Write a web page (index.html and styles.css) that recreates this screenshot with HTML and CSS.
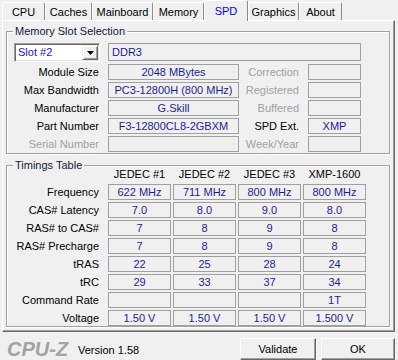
FILE: index.html
```html
<!DOCTYPE html>
<html>
<head>
<meta charset="utf-8">
<link rel="stylesheet" href="styles.css">
</head>
<body>
<div class="tabs">
  <div class="tab t-cpu">CPU</div>
  <div class="tab t-caches">Caches</div>
  <div class="tab t-mainboard">Mainboard</div>
  <div class="tab t-memory">Memory</div>
  <div class="tab t-spd active">SPD</div>
  <div class="tab t-graphics">Graphics</div>
  <div class="tab t-about">About</div>
</div>
<div class="panel">
  <div class="group slot">
    <div class="group-title">Memory Slot Selection</div>
    <div class="slot-grid">
      <div class="combo">
        <span class="combo-text">Slot #2</span>
        <span class="combo-btn"><svg width="7" height="4" viewBox="0 0 7 4"><polygon points="0,0 7,0 3.5,4" fill="#000"/></svg></span>
      </div>
      <div class="field wide">DDR3</div>

      <div class="label">Module Size</div>
      <div class="field">2048 MBytes</div>
      <div class="label dis">Correction</div>
      <div class="field"></div>

      <div class="label">Max Bandwidth</div>
      <div class="field">PC3-12800H (800 MHz)</div>
      <div class="label dis">Registered</div>
      <div class="field"></div>

      <div class="label">Manufacturer</div>
      <div class="field">G.Skill</div>
      <div class="label dis">Buffered</div>
      <div class="field"></div>

      <div class="label">Part Number</div>
      <div class="field">F3-12800CL8-2GBXM</div>
      <div class="label">SPD Ext.</div>
      <div class="field">XMP</div>

      <div class="label dis">Serial Number</div>
      <div class="field"></div>
      <div class="label dis">Week/Year</div>
      <div class="field"></div>
    </div>
  </div>

  <div class="group timings">
    <div class="group-title">Timings Table</div>
    <div class="t-grid">
      <div></div>
      <div class="head">JEDEC #1</div>
      <div class="head">JEDEC #2</div>
      <div class="head">JEDEC #3</div>
      <div class="head">XMP-1600</div>

      <div class="tlabel">Frequency</div>
      <div class="field">622 MHz</div><div class="field">711 MHz</div><div class="field">800 MHz</div><div class="field">800 MHz</div>

      <div class="tlabel">CAS# Latency</div>
      <div class="field">7.0</div><div class="field">8.0</div><div class="field">9.0</div><div class="field">8.0</div>

      <div class="tlabel">RAS# to CAS#</div>
      <div class="field">7</div><div class="field">8</div><div class="field">9</div><div class="field">8</div>

      <div class="tlabel">RAS# Precharge</div>
      <div class="field">7</div><div class="field">8</div><div class="field">9</div><div class="field">8</div>

      <div class="tlabel">tRAS</div>
      <div class="field">22</div><div class="field">25</div><div class="field">28</div><div class="field">24</div>

      <div class="tlabel">tRC</div>
      <div class="field">29</div><div class="field">33</div><div class="field">37</div><div class="field">34</div>

      <div class="tlabel">Command Rate</div>
      <div class="field"></div><div class="field"></div><div class="field"></div><div class="field">1T</div>

      <div class="tlabel">Voltage</div>
      <div class="field">1.50 V</div><div class="field">1.50 V</div><div class="field">1.50 V</div><div class="field">1.500 V</div>
    </div>
  </div>
</div>
<div class="footer">
  <div class="logo">CPU-Z</div>
  <div class="version">Version 1.58</div>
  <button class="btn validate">Validate</button>
  <button class="btn ok">OK</button>
</div>
</body>
</html>
```

FILE: styles.css
```css
* { box-sizing: border-box; }

body {
  margin: 0;
  width: 398px;
  height: 360px;
  overflow: hidden;
  background: #f0f0f0;
  font-family: "Liberation Sans", Arial, sans-serif;
  font-size: 11px;
  color: #000;
}

/* tabs */
.tabs {
  display: flex;
  align-items: flex-end;
  height: 20px;
  padding-left: 2px;
}

.tab {
  height: 18px;
  padding: 0;
  flex: none;
  display: flex;
  align-items: center;
  justify-content: center;
  border-top: 1px solid #fff;
  border-left: 1px solid #fff;
  border-right: 1px solid #8c8c8c;
  border-top-left-radius: 2px;
  border-top-right-radius: 2px;
  background: #f0f0f0;
  white-space: nowrap;
}

.t-cpu { width: 43px; }
.t-caches { width: 47px; }
.t-mainboard { width: 61px; }
.t-memory { width: 51px; }
.t-spd { width: 44px; }
.t-graphics { width: 51px; }
.t-about { width: 43px; }

.tab.active {
  height: 21px;
  margin-bottom: -1px;
  padding-bottom: 1px;
  position: relative;
  z-index: 1;
  color: #0000ff;
}

/* panel */
.panel {
  margin-left: 2px;
  width: 393px;
  border: 1px solid;
  border-color: #fff #696969 #696969 #fff;
  box-shadow: inset -1px -1px 0 #a0a0a0;
  padding: 10px 4px 4px 3px;
}

.group {
  position: relative;
  border: 1px solid #a0a0a0;
  box-shadow: inset 1px 1px 0 #fff, 1px 1px 0 #fff;
}

.group-title {
  position: absolute;
  top: -8px;
  left: 6px;
  padding: 0 2px;
  line-height: 14px;
  background: #f0f0f0;
  color: #101838;
  white-space: nowrap;
}

.slot {
  padding: 11px 0 1px 1px;
}

.slot-grid {
  display: grid;
  grid-template-columns: 100px 131px 69px 53px;
  grid-template-rows: 19px repeat(5, 16px);
  row-gap: 2px;
}

.timings {
  margin-top: 11px;
  padding: 0 0 0 1px;
}

.t-grid {
  display: grid;
  grid-template-columns: 98px repeat(4, 63px);
  grid-auto-rows: 16px;
  column-gap: 2px;
  row-gap: 2px;
}

.label {
  text-align: right;
  padding-right: 9px;
  line-height: 16px;
  white-space: nowrap;
}

.label.dis { color: #a0a0a0; }

.tlabel {
  text-align: right;
  padding-right: 7px;
  line-height: 16px;
  white-space: nowrap;
}

.head {
  text-align: center;
  line-height: 16px;
  white-space: nowrap;
}

.field {
  height: 16px;
  border: 1px solid #a0a0a0;
  line-height: 14px;
  text-align: center;
  color: #1c1c96;
  white-space: nowrap;
  overflow: hidden;
}

.field.wide {
  grid-column: 2 / 5;
  height: 18px;
  line-height: 16px;
  text-align: left;
  padding-left: 3px;
}

/* combo */
.combo {
  margin-left: 6px;
  margin-right: 8px;
  height: 19px;
  display: flex;
  align-items: stretch;
  background: #fff;
  border: 1px solid;
  border-color: #a0a0a0 #fff #fff #a0a0a0;
  box-shadow: inset 1px 1px 0 #696969, inset -1px -1px 0 #e3e3e3;
  padding: 1px;
}

.combo-text {
  flex: 1;
  padding-left: 2px;
  line-height: 15px;
  color: #1414c8;
}

.combo-btn {
  width: 16px;
  display: flex;
  align-items: center;
  justify-content: center;
  background: #f0f0f0;
  border: 1px solid;
  border-color: #f0f0f0 #696969 #696969 #f0f0f0;
  box-shadow: inset 1px 1px 0 #fff, inset -1px -1px 0 #a0a0a0;
}

/* footer */
.footer {
  display: flex;
  align-items: flex-start;
  height: 28px;
  padding-right: 3px;
}

.logo {
  width: 60px;
  margin-left: 7px;
  margin-top: 7px;
  font-size: 20px;
  line-height: 20px;
  font-weight: bold;
  font-style: italic;
  color: #a3a3a3;
  white-space: nowrap;
}

.version {
  margin-left: 11px;
  margin-top: 11px;
  line-height: 14px;
  white-space: nowrap;
}

.btn {
  margin-top: 6px;
  height: 22px;
  padding: 0;
  font-family: inherit;
  font-size: 11px;
  color: #000;
  background: #f0f0f0;
  border: 1px solid;
  border-color: #fff #696969 #696969 #fff;
  box-shadow: inset -1px -1px 0 #a0a0a0;
}

.validate {
  margin-left: auto;
  width: 76px;
}

.ok {
  margin-left: 5px;
  width: 74px;
}
```
